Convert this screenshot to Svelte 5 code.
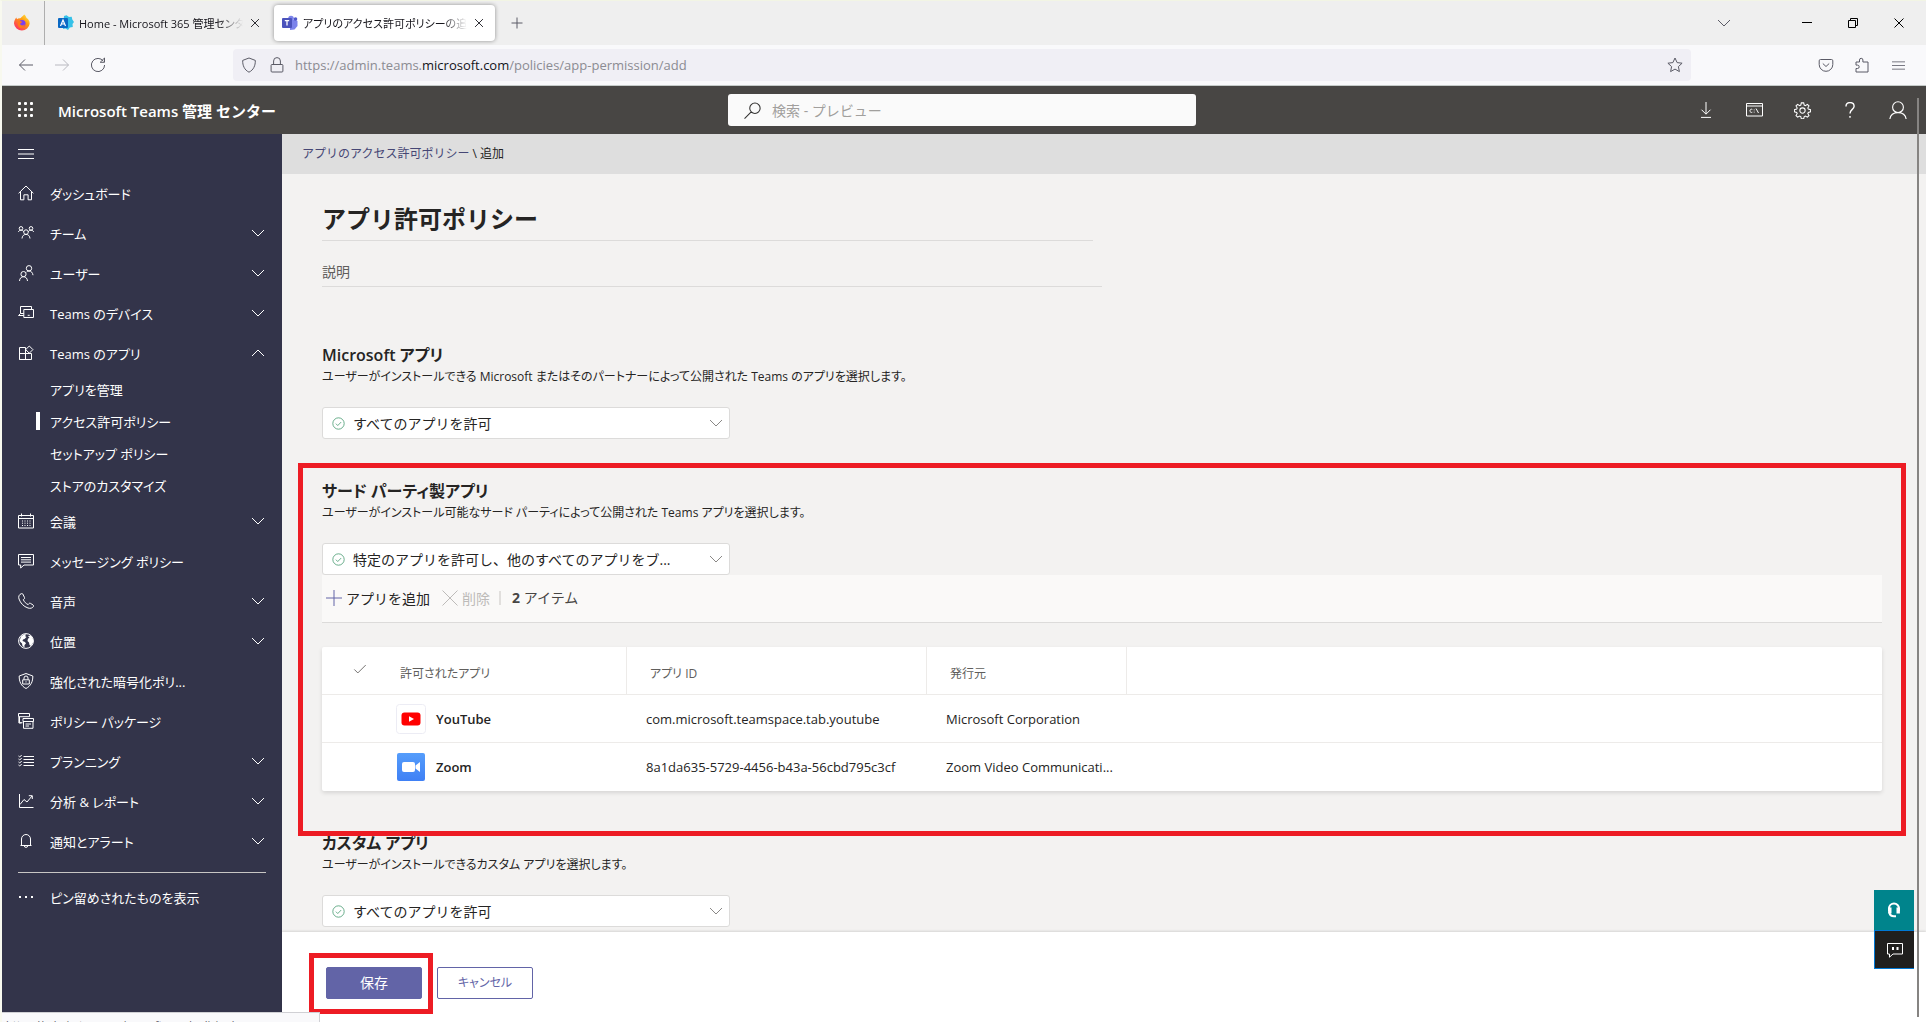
<script lang="ts">
  type NavItem = {
    label: string;
    icon: string;
    expandable?: boolean;
    open?: boolean;
    children?: { label: string; active?: boolean }[];
  };

  const icons: Record<string, string> = {
    menu: "M0 3.5h16M0 8h16M0 12.5h16",
    back: "M15 8H1.5M7 2.5L1.5 8L7 13.5",
    forward: "M1 8h13.5M9 2.5L14.5 8L9 13.5",
    reload: "M13.4 4.2A6.6 6.6 0 1 0 14.6 8M14.5 1v4.3h-4.3z",
    shield: "M8 1L14.3 3.4C14.5 8.5 12.5 13 8 15.2C3.5 13 1.5 8.5 1.7 3.4z",
    lock: "M3 7.5h10a.9.9 0 0 1 .9.9v5.7a.9.9 0 0 1-.9.9H3a.9.9 0 0 1-.9-.9V8.4a.9.9 0 0 1 .9-.9zM4.6 7.3V4a3.4 3.4 0 0 1 6.8 0v3.3",
    star: "M8 1L10.1 5.6L15.1 6.2L11.4 9.6L12.4 14.6L8 12.1L3.6 14.6L4.6 9.6L.9 6.2L5.9 5.6z",
    pocket: "M2.5 2.5h11A1.3 1.3 0 0 1 14.8 3.8V7.5A6.8 6.8 0 0 1 1.2 7.5V3.8A1.3 1.3 0 0 1 2.5 2.5zM4.8 6.5L8 9.5L11.2 6.5",
    puzzle: "M2 5h3.5V3a1.7 1.7 0 0 1 3.4 0v2H14v10H2v-3.5h1.5a1.7 1.7 0 0 0 0-3.4H2z",
    close: "M3.5 3.5l9 9M12.5 3.5l-9 9",
    plus: "M8 2.5v11M2.5 8h11",
    bigPlus: "M8 0v16M0 8h16",
    bigClose: "M.5.5l15 15M15.5.5l-15 15",
    chevronDown: "M2 5l6 6l6-6",
    chevronUp: "M2 11l6-6l6 6",
    minimize: "M3 7.5h10",
    restore: "M3.5 5.5h7v7h-7zM5.5 5.5v-2h7v7h-2",
    search: "M10.3 1a4.9 4.9 0 1 1 0 9.8a4.9 4.9 0 0 1 0-9.8zM6.8 9.3L.5 15.6",
    download: "M8 0v12M3.5 7.7L8 12.2l4.5-4.5M3 15.4h10",
    help: "M4 4.5C4 2 5.7.6 8 .6s4.1 1.4 4.1 3.7C12.1 7.4 8 7.5 8 11.6M8 14v1.7",
    person: "M8 .7a4.8 4.8 0 1 1 0 9.6a4.8 4.8 0 0 1 0-9.6zM.7 16.5c.4-4 3.5-6.2 7.3-6.2s6.9 2.2 7.3 6.2",
    gear: "M6.9.8h2.2l.5 2.1l1.1.5l1.9-1.2l1.5 1.5l-1.1 1.9l.5 1.1l2.1.5v2l-2.1.6l-.5 1.1l1.1 1.9l-1.5 1.5l-1.9-1.1l-1.1.5l-.5 2.1H6.9l-.5-2.1l-1.1-.5l-1.9 1.1l-1.5-1.5L3 10.9l-.5-1.1L.4 9.2v-2l2.1-.5L3 5.6L1.9 3.7l1.5-1.5l1.9 1.2l1.1-.5zM8 5.5a2.5 2.5 0 1 1 0 5a2.5 2.5 0 0 1 0-5z",
    home: "M.6 8.3L8 1l7.4 7.3M2.5 6.8v8h3.4v-5h4.2v5h3.4v-8",
    team: "M8 4.8a2.3 2.3 0 1 1 0 4.6a2.3 2.3 0 0 1 0-4.6zM4 13.5c.2-2.5 1.7-4.1 4-4.1s3.8 1.6 4 4.1M3 1.6a1.8 1.8 0 1 1 0 3.6a1.8 1.8 0 0 1 0-3.6zM13 1.6a1.8 1.8 0 1 1 0 3.6a1.8 1.8 0 0 1 0-3.6zM.4 7c.3-1.2 1.3-1.8 2.6-1.8s2 .5 2.7 1.6M15.6 7c-.3-1.2-1.3-1.8-2.6-1.8s-2 .5-2.7 1.6",
    users: "M5.5 6.5a2.6 2.6 0 1 1 0 5.2a2.6 2.6 0 0 1 0-5.2zM1.5 16c.2-2.6 1.7-4.3 4-4.3s3.8 1.7 4 4.3M11 .6a2.7 2.7 0 1 1 0 5.4a2.7 2.7 0 0 1 0-5.4zM8.6 7c.7-.7 1.5-1 2.4-1c2.2 0 3.7 1.7 4 4.2",
    devices: "M2.5 8.5v-7h11V4M.5 10.5h5.3M.5 10.5l2-2h3.3M5.8 4.5h9.7v8H5.8zM9.7 10.3h2",
    apps: "M1.5 2.5h6v12h-6zM1.5 8.5h12v6h-12M7.5 8.5v6M11.3 1l3.6 3.6l-3.6 3.6l-3.6-3.6z",
    calendar: "M.5 2.5h15v12.5H.5zM.5 5.5h15M3.5.5v3M12.5.5v3M4 8h1M6.5 8h1M9 8h1M11.5 8h1M4 10.2h1M6.5 10.2h1M9 10.2h1M11.5 10.2h1M4 12.5h1M6.5 12.5h1M9 12.5h1M11.5 12.5h1",
    message: "M.5 1.5h15v10.5H6L2.7 15v-3H.5zM3 4.5h10M3 6.8h10M3 9.1h10",
    phone: "M3.5.6C1 1.4.2 3.7 1 6c1.4 4 4.6 7.6 9 9c2.4.7 4.6.2 5.5-1.7c.2-.6 0-1-.4-1.3l-2.7-1.7c-.5-.3-1-.2-1.3.2l-.9 1.1c-2.1-.8-4-2.7-4.9-4.9l1-.9c.4-.4.5-.8.2-1.3L4.8 1C4.5.6 4 .5 3.5.6z",
    globe: "M8 .6a7.4 7.4 0 1 1 0 14.8a7.4 7.4 0 0 1 0-14.8z",
    shieldLock: "M8 .5L14.8 3C15 8.5 12.8 13 8 15.5C3.2 13 1 8.5 1.2 3zM4.7 6.8h6.6v4.2H4.7zM6 6.6V5a2 2 0 0 1 4 0v1.6M8 8.3v1.2",
    packages: "M3.5 10H.9V4M.5.5h11v3.2H.5zM1.5 3.7v6h3M5 5.5h10.5v3H5zM5.5 8.5v6.8h9.5V8.5M7.5 11h5.5M7.5 13h3.5",
    planning: "M5.5 3.5h10.5M5.5 6.5h10.5M5.5 9.5h10.5M5.5 12.5h10.5M.5 3l1.2 1L3.7 2M.5 6l1.2 1L3.7 5M.5 9l1.2 1L3.7 8M.5 12l1.2 1L3.7 11",
    chart: "M1.5 1v13.5H15.5M2 11.5L6 6.5l3 2.5L14 3M10.8 2.7H14.3V6",
    bell: "M2.5 12.5h11M3.5 12.5V6a4.5 4.5 0 0 1 9 0v6.5M6.3 12.7a1.7 1.7 0 0 0 3.4 0",
    circleCheck: "M8 1a7 7 0 1 1 0 14a7 7 0 0 1 0-14zM4.8 8.2l2.3 2.3l4.2-4.3",
    check: "M1.5 8.5l4 4L14.5 3.5",
  };

  const nav: NavItem[] = [
    { label: "ダッシュボード", icon: "home" },
    { label: "チーム", icon: "team", expandable: true },
    { label: "ユーザー", icon: "users", expandable: true },
    { label: "Teams のデバイス", icon: "devices", expandable: true },
    {
      label: "Teams のアプリ",
      icon: "apps",
      expandable: true,
      open: true,
      children: [
        { label: "アプリを管理" },
        { label: "アクセス許可ポリシー", active: true },
        { label: "セットアップ ポリシー" },
        { label: "ストアのカスタマイズ" },
      ],
    },
    { label: "会議", icon: "calendar", expandable: true },
    { label: "メッセージング ポリシー", icon: "message" },
    { label: "音声", icon: "phone", expandable: true },
    { label: "位置", icon: "globe", expandable: true },
    { label: "強化された暗号化ポリ...", icon: "shieldLock" },
    { label: "ポリシー パッケージ", icon: "packages" },
    { label: "プランニング", icon: "planning", expandable: true },
    { label: "分析 & レポート", icon: "chart", expandable: true },
    { label: "通知とアラート", icon: "bell", expandable: true },
  ];

  const allowedApps = [
    { name: "YouTube", id: "com.microsoft.teamspace.tab.youtube", publisher: "Microsoft Corporation" },
    { name: "Zoom", id: "8a1da635-5729-4456-b43a-56cbd795c3cf", publisher: "Zoom Video Communicati..." },
  ];

  let policyName = $state("アプリ許可ポリシー");
  let description = $state("");
</script>

{#snippet icon(name: string, size = 16)}
  <svg class="icon" width={size} height={size} viewBox="0 0 16 16" aria-hidden="true">
    <path d={icons[name]} />
    {#if name === "globe"}
      <path class="solid" d="M3 3.5L6 1.2l2.5.3L7 3l1.5 1L6.5 6L5 6.5L4.5 8L7 9l1 1.5L6.5 12v2.5L4.5 13L4 10.5L1.5 8zM10 3l3-.5l2 3.5l.3 3l-2.3 4l-1.5-1L11 9.5L9.5 8L10 5.5L11.5 5z" />
    {/if}
  </svg>
{/snippet}

{#snippet picker(id: string, label: string, value: string)}
  <div class="picker">
    <span class="picker-ok">{@render icon("circleCheck", 13)}</span>
    <select {id} aria-label={label}>
      <option>{value}</option>
    </select>
    <span class="picker-arrow">{@render icon("chevronDown")}</span>
  </div>
{/snippet}

<div class="window">
  <div class="tabs">
    <button class="pinned" aria-label="Firefox">
      <svg width="18" height="18" viewBox="0 0 18 18" aria-hidden="true">
        <defs>
          <linearGradient id="fx" x1="1" y1="0" x2="0.2" y2="1">
            <stop offset="0" stop-color="#fff44f" />
            <stop offset="0.45" stop-color="#ff980e" />
            <stop offset="1" stop-color="#ff2a6a" />
          </linearGradient>
        </defs>
        <path fill="url(#fx)" d="M11.3.5c1.5 1.5 2 2.7 2.2 3.5c1.5.8 3.2 2.6 3.2 5.5a7.9 7.9 0 0 1-15.7 0C1 7 2 5 3.3 3.5L4 5.2c1-.8 2-.9 2.8-.8C8 4 9 2.5 11.3.5z" />
        <circle cx="9" cy="9.5" r="3.5" fill="#7b3ff2" />
        <path fill="#ff7a1a" d="M5 7.5c1.5-.8 3-.3 4.5.6c-1.2.2-1.2 1.4-2.5 1.6c.5 2 3.5 2.5 5 .3c-.3 3-2.5 4.3-4.5 4S4.3 10.5 5 7.5z" />
      </svg>
    </button>
    <div class="tab">
      <svg width="16" height="16" viewBox="0 0 16 16" aria-hidden="true">
        <path fill="#35c1e8" d="M6 1l2.5-.7L11 2l2.7-.3l.6 2.9L16 7l-1.5 2l.3 3l-3 .5L10 15l-2.5-1.5L5 14z" />
        <rect x="0" y="3" width="10" height="10" rx="1" fill="#0a69c4" />
        <path d="M2.5 11L5 5l2.5 6M3.4 9h3.2" fill="none" stroke="#fff" stroke-width="1.2" />
      </svg>
      <span class="tab-title">Home - Microsoft 365 管理センター</span>
      <button class="tab-close" aria-label="閉じる">{@render icon("close", 14)}</button>
    </div>
    <div class="tab current">
      <svg width="16" height="16" viewBox="0 0 16 16" aria-hidden="true">
        <circle cx="9" cy="3.5" r="2.8" fill="#7b83eb" />
        <path fill="#7b83eb" d="M8 5h6l1.5 1v5l-3 3.5L8 15z" />
        <circle cx="13.5" cy="4" r="1.8" fill="#5059c9" />
        <rect x="0" y="3" width="10" height="10" rx="1" fill="#4b53bc" />
        <path d="M2.8 5.6h4.4M5 5.6v5" fill="none" stroke="#fff" stroke-width="1.3" />
      </svg>
      <span class="tab-title">アプリのアクセス許可ポリシーの追加</span>
      <button class="tab-close" aria-label="閉じる">{@render icon("close", 14)}</button>
    </div>
    <button class="tool" aria-label="新しいタブ">{@render icon("plus")}</button>
    <div class="spacer"></div>
    <button class="tool all-tabs" aria-label="タブを一覧表示">{@render icon("chevronDown")}</button>
    <div class="window-buttons">
      <button aria-label="最小化">{@render icon("minimize")}</button>
      <button aria-label="元に戻す">{@render icon("restore")}</button>
      <button aria-label="ウィンドウを閉じる">{@render icon("close")}</button>
    </div>
  </div>

  <div class="toolbar">
    <button class="tool" aria-label="戻る">{@render icon("back")}</button>
    <button class="tool" aria-label="進む" disabled>{@render icon("forward")}</button>
    <button class="tool" aria-label="再読み込み">{@render icon("reload")}</button>
    <div class="address">
      {@render icon("shield")}
      {@render icon("lock")}
      <span class="url">https://admin.teams.<b>microsoft.com</b>/policies/app-permission/add</span>
      <button aria-label="ブックマーク">{@render icon("star")}</button>
    </div>
    <div class="extras">
      <button class="tool" aria-label="Pocket">{@render icon("pocket")}</button>
      <button class="tool" aria-label="拡張機能">{@render icon("puzzle")}</button>
      <button class="tool" aria-label="メニュー">{@render icon("menu", 13)}</button>
    </div>
  </div>

  <header class="suite">
    <div class="brand">
      <button aria-label="アプリ起動ツール">
        <svg width="16" height="16" viewBox="0 0 16 16" fill="#fff" aria-hidden="true">
          {#each [0, 6, 12] as y}
            {#each [0, 6, 12] as x}
              <rect {x} {y} width="3" height="3" rx="1" />
            {/each}
          {/each}
        </svg>
      </button>
      <span class="product">Microsoft Teams 管理 センター</span>
    </div>
    <label class="search">
      {@render icon("search", 17)}
      <input type="search" placeholder="検索 - プレビュー" aria-label="検索" />
    </label>
    <div class="suite-actions">
      <button aria-label="ダウンロード">{@render icon("download")}</button>
      <button aria-label="PowerShell">
        <svg class="icon" width="17" height="14" viewBox="0 0 17 14" aria-hidden="true">
          <path d="M.5.5h16v12.5H.5zM.5 3h16M6.3 6.4a1.6 1.6 0 1 0 0 2.8M8.2 6.5v.8M8.2 8.7v.8M10 5.5l2.5 4.5" />
        </svg>
      </button>
      <button aria-label="設定">{@render icon("gear", 17)}</button>
      <button class="help" aria-label="ヘルプ">{@render icon("help")}</button>
      <button aria-label="アカウント">{@render icon("person", 18)}</button>
    </div>
  </header>

  <div class="app">
    <nav class="side">
      <button class="collapse" aria-label="ナビゲーションを折りたたむ">{@render icon("menu")}</button>
      <ul>
        {#each nav as item}
          <li>
            <a class="nav-row" href="#{item.icon}">
              {@render icon(item.icon)}
              <span class="nav-label">{item.label}</span>
              {#if item.expandable}
                {@render icon(item.open ? "chevronUp" : "chevronDown")}
              {/if}
            </a>
            {#if item.children}
              <ul>
                {#each item.children as child}
                  <li><a class="sub-row" class:active={child.active} href="#{item.icon}">{child.label}</a></li>
                {/each}
              </ul>
            {/if}
          </li>
        {/each}
      </ul>
      <hr />
      <a class="nav-row" href="#pinned">
        <svg width="16" height="16" viewBox="0 0 16 16" fill="#fff" aria-hidden="true">
          <rect x="1" y="7" width="2" height="2" /><rect x="7" y="7" width="2" height="2" /><rect x="13" y="7" width="2" height="2" />
        </svg>
        <span class="nav-label">ピン留めされたものを表示</span>
      </a>
    </nav>

    <main>
      <div class="crumbs"><a href="#policies">アプリのアクセス許可ポリシー</a> \ 追加</div>

      <div class="content">
        <input class="name" aria-label="ポリシー名" bind:value={policyName} />
        <input class="description" aria-label="説明" placeholder="説明" bind:value={description} />

        <section class="first">
          <h2>Microsoft アプリ</h2>
          <p>ユーザーがインストールできる Microsoft またはそのパートナーによって公開された Teams のアプリを選択します。</p>
          {@render picker("ms-apps", "Microsoft アプリ", "すべてのアプリを許可")}
        </section>

        <section class="marked">
          <h2>サード パーティ製アプリ</h2>
          <p>ユーザーがインストール可能なサード パーティによって公開された Teams アプリを選択します。</p>
          {@render picker("third-party-apps", "サード パーティ製アプリ", "特定のアプリを許可し、他のすべてのアプリをブ...")}
          <div class="commands">
            <button class="add">{@render icon("bigPlus")}アプリを追加</button>
            <button class="remove" disabled>{@render icon("bigClose")}削除</button>
            <span class="count"><b>2</b> アイテム</span>
          </div>
          <table>
            <colgroup>
              <col class="c-check" /><col class="c-app" /><col class="c-id" /><col class="c-publisher" /><col />
            </colgroup>
            <thead>
              <tr>
                <th class="check" aria-label="選択">{@render icon("check", 14)}</th>
                <th class="ruled">許可されたアプリ</th>
                <th class="ruled">アプリ ID</th>
                <th class="ruled">発行元</th>
                <th></th>
              </tr>
            </thead>
            <tbody>
              {#each allowedApps as app}
                <tr>
                  <td></td>
                  <td>
                    <div class="app-name">
                      {#if app.name === "YouTube"}
                        <svg width="30" height="30" viewBox="0 0 30 30" aria-hidden="true">
                          <rect x="0.5" y="0.5" width="29" height="29" rx="3" fill="#fff" stroke="#ececf4" />
                          <rect x="5.5" y="8.5" width="19" height="13" rx="3" fill="#f00" />
                          <path d="M13 12.3l5 2.7l-5 2.7z" fill="#fff" />
                        </svg>
                      {:else}
                        <svg width="30" height="30" viewBox="0 0 30 30" aria-hidden="true">
                          <defs>
                            <linearGradient id="zm" x1="0" y1="0" x2="0" y2="1">
                              <stop offset="0" stop-color="#559dfb" />
                              <stop offset="1" stop-color="#3f80f5" />
                            </linearGradient>
                          </defs>
                          <rect x="1" y="1" width="28" height="28" rx="2" fill="url(#zm)" />
                          <rect x="6" y="10" width="13" height="10" rx="2" fill="#fff" />
                          <path d="M19.5 13.5l4.5-3.5v10l-4.5-3.5z" fill="#fff" />
                        </svg>
                      {/if}
                      <b>{app.name}</b>
                    </div>
                  </td>
                  <td>{app.id}</td>
                  <td>{app.publisher}</td>
                  <td></td>
                </tr>
              {/each}
            </tbody>
          </table>
        </section>

        <section>
          <h2>カスタム アプリ</h2>
          <p>ユーザーがインストールできるカスタム アプリを選択します。</p>
          {@render picker("custom-apps", "カスタム アプリ", "すべてのアプリを許可")}
        </section>
      </div>

      <footer>
        <div class="save-wrap"><button class="save">保存</button></div>
        <button class="cancel">キャンセル</button>
      </footer>
    </main>
  </div>

  <div class="float">
    <button class="support" aria-label="サポート">
      <svg width="16" height="16" viewBox="0 0 16 16" fill="none" stroke="#fff" aria-hidden="true">
        <path d="M3 9V6.5a5 5 0 0 1 10 0V9" stroke-width="2" />
        <path d="M3.8 5.5v6M12.2 5.5v6" stroke-width="3.4" />
        <path d="M3.5 11c.3 2 1.7 3.2 4.5 3.2h2" stroke-width="2" />
      </svg>
    </button>
    <button class="feedback" aria-label="フィードバック">
      <svg width="16" height="16" viewBox="0 0 16 16" fill="none" stroke="#fff" aria-hidden="true">
        <path d="M.5 1.5h15v10.5H6L2.5 15.2v-3.2H.5z" />
        <path d="M6 5v3M10.5 5v3" stroke-width="2" />
      </svg>
    </button>
  </div>
  <div class="scroll-thumb"></div>
  <div class="link-status">https://admin.teams.microsoft.com/policies/</div>
</div>

<style>
  :global(body) { margin: 0; }
  .window {
    position: relative;
    box-sizing: border-box;
    display: flex;
    flex-direction: column;
    height: 100vh;
    overflow: hidden;
    border-top: 1px solid #f2f5e4;
    border-left: 2px solid #f8f9ef;
    font-family: "Open Sans", "Noto Sans CJK JP", sans-serif;
    font-size: 13px;
    color: #252423;
    background: #f3f2f1;
  }
  button {
    display: flex;
    align-items: center;
    justify-content: center;
    padding: 0;
    border: none;
    background: none;
    color: inherit;
    font: inherit;
  }
  a { color: inherit; text-decoration: none; }
  ul { margin: 0; padding: 0; list-style: none; }
  input, select { font: inherit; color: inherit; box-sizing: border-box; outline: none; }
  .icon { flex: none; fill: none; stroke: currentColor; }
  .icon .solid { fill: currentColor; stroke: none; }
  .spacer { flex: 1; }

  /* browser chrome */
  .tabs { flex: none; display: flex; align-items: center; height: 44px; background: #efefef; color: #15141a; }
  .pinned { width: 43px; height: 44px; padding-right: 2px; border-right: 1px solid #aeaeae; box-sizing: border-box; }
  .tab {
    box-sizing: border-box;
    display: flex;
    align-items: center;
    gap: 5px;
    width: 221px;
    height: 36px;
    margin-left: 5px;
    padding: 0 9px 0 8px;
    border-radius: 4px;
    font-size: 11px;
    font-feature-settings: "palt";
  }
  .tab.current { margin-left: 3px; background: #fff; box-shadow: 0 0 4px rgba(0, 0, 0, 0.4); }
  .tab-title {
    flex: 1;
    overflow: hidden;
    white-space: nowrap;
    mask-image: linear-gradient(to right, #000 85%, transparent);
  }
  .tab > svg { flex: none; }
  .tab-close { width: 14px; }
  .tool { width: 36px; height: 32px; color: #5b5b66; }
  .tabs > .tool { margin-left: 4px; }
  .tool:disabled { color: #b9b9c0; }
  .tabs > .all-tabs { margin-right: 42px; }
  .window-buttons { display: flex; margin-right: 4px; color: #000; }
  .window-buttons button { width: 46px; height: 32px; }
  .toolbar {
    flex: none;
    display: flex;
    align-items: center;
    height: 40px;
    padding: 0 10px 0 6px;
    background: #f9f9fb;
    border-bottom: 1px solid #c5cbc9;
    color: #5b5b66;
  }
  .address {
    flex: 1;
    display: flex;
    align-items: center;
    gap: 12px;
    height: 32px;
    margin: 0 117px;
    padding: 0 8px;
    border-radius: 4px;
    background: #f0eff5;
  }
  .url { flex: 1; margin-left: -2px; font-size: 13px; line-height: 16px; color: #8b8b92; }
  .url b { font-weight: 400; color: #15141a; }
  .extras { display: flex; }

  /* suite header */
  .suite {
    flex: none;
    display: grid;
    grid-template-columns: 1fr minmax(200px, 468px) 1fr;
    align-items: center;
    height: 48px;
    padding-right: 4px;
    background: #484644;
    color: #fff;
  }
  .brand { display: flex; align-items: center; gap: 24px; padding-left: 16px; }
  .product { font-size: 15px; font-weight: 600; white-space: nowrap; }
  .search {
    display: flex;
    align-items: center;
    gap: 11px;
    height: 32px;
    padding: 0 16px;
    border-radius: 3px;
    background: #fafafa;
    color: #323130;
  }
  .search input { flex: 1; min-width: 0; padding: 0; border: none; background: none; font-size: 14px; }
  .search input::placeholder { color: #a19f9d; opacity: 1; }
  .suite-actions { display: flex; justify-content: flex-end; }
  .suite-actions button { width: 48px; height: 46px; }
  .help .icon { stroke-width: 1.4px; }

  /* side navigation */
  .app { flex: 1; display: flex; min-height: 0; }
  .side { flex: none; width: 280px; background: #33344a; color: #fff; font-feature-settings: "palt"; }
  .collapse { width: 48px; height: 40px; }
  .nav-row { display: flex; align-items: center; gap: 16px; height: 38px; padding: 0 16px 2px; }
  .nav-label { flex: 1; white-space: nowrap; }
  .sub-row {
    position: relative;
    display: flex;
    align-items: center;
    height: 30px;
    padding: 0 0 2px 48px;
  }
  .sub-row.active::before {
    content: "";
    position: absolute;
    left: 34px;
    width: 4px;
    height: 18px;
    background: #fff;
  }
  hr { height: 1px; margin: 10px 16px 5px; border: none; background: #c8c6c4; }

  /* page */
  main { flex: 1; min-width: 0; display: flex; flex-direction: column; background: #f3f2f1; }
  .crumbs {
    flex: none;
    height: 40px;
    padding-left: 20px;
    line-height: 40px;
    font-size: 12px;
    background: #dedede;
  }
  .crumbs a { color: #464775; }
  .content { flex: 1; min-height: 0; padding: 20px 44px 0 40px; }
  .name, .description {
    display: block;
    width: 100%;
    padding: 0;
    border: none;
    border-bottom: 1px solid #dcdbda;
    border-radius: 0;
    background: none;
  }
  .name { max-width: 771px; height: 47px; font-size: 24px; font-weight: 700; }
  .description { max-width: 780px; height: 30px; margin-top: 16px; font-size: 14px; }
  .description::placeholder { color: #605e5c; opacity: 1; }
  section { margin-top: 40px; }
  section.first { margin-top: 56px; }
  h2 { margin: 0; font-size: 16px; line-height: 24px; font-weight: 600; font-feature-settings: "palt"; }
  p { margin: 0 0 20px; font-size: 12px; line-height: 20px; font-feature-settings: "palt"; }
  .picker {
    box-sizing: border-box;
    display: grid;
    grid-template-columns: 31px 1fr 31px;
    align-items: center;
    width: 408px;
    max-width: 100%;
    height: 32px;
    border: 1px solid #dcdbda;
    border-radius: 3px;
    background: #fff;
  }
  .picker select {
    grid-area: 1 / 1 / 2 / 4;
    width: 100%;
    height: 30px;
    padding: 0 31px 0 30px;
    border: none;
    background: none;
    appearance: none;
    font-size: 14px;
  }
  .picker-ok { grid-area: 1 / 1; display: flex; padding-left: 9px; color: #479b71; }
  .picker-arrow { grid-area: 1 / 3; display: flex; padding-left: 10px; color: #8a8886; }
  .marked { position: relative; }
  .marked::after {
    content: "";
    position: absolute;
    inset: -16px -24px -45px -24px;
    border: 5px solid #ed1c24;
    pointer-events: none;
  }
  .commands {
    box-sizing: border-box;
    display: flex;
    align-items: center;
    height: 48px;
    padding: 0 0 2px 4px;
    border-bottom: 1px solid #dcdbda;
    background: #faf9f8;
    font-size: 14px;
  }
  .commands button { gap: 4px; height: 32px; }
  .add .icon { color: #6264a7; }
  .remove { margin-left: 12px; color: #bdbbb9; }
  .count {
    margin-left: 9px;
    padding-left: 11px;
    line-height: 14px;
    border-left: 2px solid #e1dfdd;
    color: #484644;
  }
  .count b { font-weight: 700; }
  table {
    width: 100%;
    margin-top: 24px;
    table-layout: fixed;
    border-spacing: 0;
    border-radius: 2px;
    background: #fff;
    box-shadow: 0 2px 4px rgba(0, 0, 0, 0.12);
  }
  .c-check { width: 55px; }
  .c-app { width: 250px; }
  .c-id { width: 300px; }
  .c-publisher { width: 200px; }
  th, td { box-sizing: border-box; height: 48px; padding: 0 0 0 19px; text-align: left; white-space: nowrap; }
  th, tr:not(:last-child) td { border-bottom: 1px solid #edebe9; }
  th { padding: 4px 0 0 23px; font-size: 12px; font-weight: 400; color: #605e5c; font-feature-settings: "palt"; }
  th.check { padding: 0 0 0 31px; }
  .ruled { border-right: 1px solid #edebe9; }
  .app-name { display: flex; align-items: center; gap: 10px; }
  b { font-weight: 600; }
  footer {
    position: relative;
    flex: none;
    display: flex;
    gap: 15px;
    box-sizing: border-box;
    height: 90px;
    padding: 35px 44px 0;
    background: #fff;
    box-shadow: 0 -1px 2px rgba(0, 0, 0, 0.12);
  }
  footer button {
    box-sizing: border-box;
    width: 96px;
    height: 32px;
    padding-bottom: 2px;
    border: 1px solid #6264a7;
    border-radius: 2px;
    color: #6264a7;
    font-feature-settings: "palt";
  }
  footer .save { background: #6264a7; color: #fff; font-size: 14px; }
  footer .cancel { font-size: 12px; }
  .save-wrap { position: relative; }
  .save-wrap::after {
    content: "";
    position: absolute;
    inset: -14px -11px auto -17px;
    height: 51px;
    border: 5px solid #ed1c24;
    pointer-events: none;
  }

  /* overlays */
  .float { position: absolute; right: 12px; bottom: 53px; }
  .float button { width: 40px; height: 40px; box-sizing: border-box; }
  .support { background: #00848c; }
  .float .feedback { height: 39px; background: #201f1e; border: 1px solid #0078d4; border-right: none; }
  .scroll-thumb { position: absolute; top: 97px; right: 7px; bottom: 5px; width: 2px; background: #868482; }
  .link-status {
    position: absolute;
    left: -2px;
    bottom: 0;
    box-sizing: border-box;
    width: 320px;
    height: 10px;
    padding-left: 6px;
    overflow: hidden;
    border-top: 1px solid #d0d0d4;
    border-right: 1px solid #d0d0d4;
    background: #f9f9fb;
    color: #5b5b66;
    font-size: 11px;
    line-height: 24px;
    white-space: nowrap;
  }
</style>
